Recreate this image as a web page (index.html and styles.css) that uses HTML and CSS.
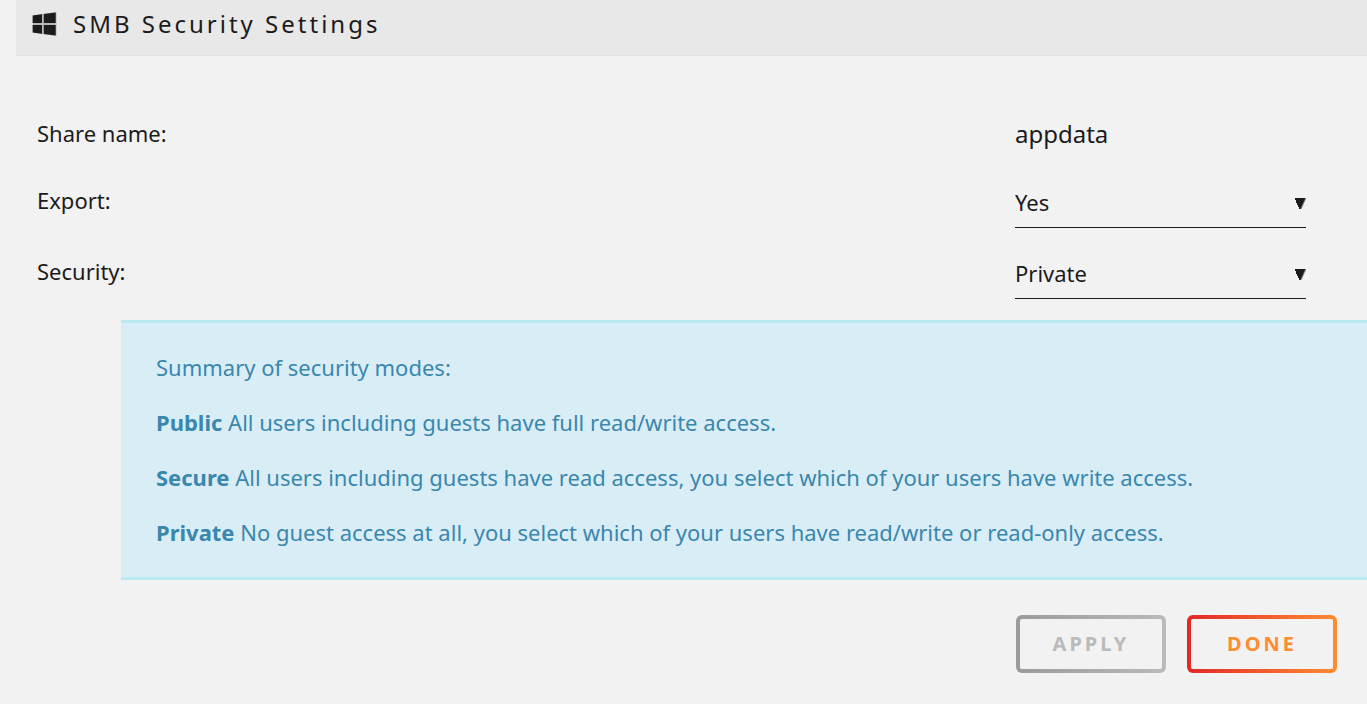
FILE: index.html
```html
<!DOCTYPE html>
<html lang="en">
<head>
<meta charset="utf-8">
<meta name="viewport" content="width=device-width, initial-scale=1">
<title>SMB Security Settings</title>
<link rel="stylesheet" href="styles.css">
</head>
<body>
<header class="title">
  <svg class="title-icon" viewBox="0 0 24 24" aria-hidden="true">
    <path class="icon-back" d="M0 3.2 24 0v24L0 20.8z"/>
    <path class="icon-pane" d="M.2 3.500 9.500 2.300V11H.2zM11.300 2 23.200.5V11H11.300zM.2 13H9.500v8.700L.2 20.500zM11.300 13H23.200v10.500L11.300 22z"/>
  </svg>
  <h1 class="title-text">SMB Security Settings</h1>
</header>
<main>
  <form class="form">
    <div class="row row-static">
      <span class="label">Share name:</span>
      <span class="share-name">appdata</span>
    </div>
    <div class="row">
      <label class="label" for="export">Export:</label>
      <select class="select" id="export"><option>Yes</option><option>No</option></select>
    </div>
    <div class="row row-last">
      <label class="label" for="security">Security:</label>
      <select class="select" id="security"><option>Private</option><option>Secure</option><option>Public</option></select>
    </div>
    <section class="help">
      <p class="help-line">Summary of security modes:</p>
      <p class="help-line"><b>Public</b> All users including guests have full read/write access.</p>
      <p class="help-line"><b>Secure</b> All users including guests have read access, you select which of your users have write access.</p>
      <p class="help-line"><b>Private</b> No guest access at all, you select which of your users have read/write or read-only access.</p>
    </section>
    <div class="actions">
      <button class="button button-apply" type="submit" disabled>APPLY</button>
      <button class="button button-done" type="button">DONE</button>
    </div>
  </form>
</main>
</body>
</html>
```
FILE: styles.css
```css
* {
  box-sizing: border-box;
}

body {
  margin: 0;
  background: #f2f2f2;
  color: #1c1b1b;
  font-family: "Noto Sans", "Open Sans", sans-serif;
  font-size: 22px;
  line-height: 26px;
}

.title {
  display: flex;
  align-items: center;
  gap: 16px;
  height: 56px;
  margin-left: 16px;
  padding: 0 16px 8px;
  background: #e8e8e8;
  border-bottom: 1px solid #e0e0e0;
}

.title-icon {
  width: 25px;
  height: 24px;
}

.icon-back {
  fill: #b8bab8;
}

.icon-pane {
  fill: #1c1b1b;
}

.title-text {
  margin: 0;
  font-size: 24px;
  font-weight: 400;
  letter-spacing: 3px;
}

.form {
  padding-top: 64px;
}

.row {
  display: grid;
  grid-template-columns: minmax(0, 1fr) 291px;
  align-items: start;
  height: 71px;
  padding: 0 61px 0 37px;
}

.row-static {
  height: 67px;
}

.row-last {
  height: 62px;
}

.share-name {
  font-size: 24px;
  line-height: 28px;
}

.select {
  appearance: none;
  height: 41px;
  padding: 0 24px 10px 0;
  border: 0;
  border-bottom: 1px solid #1c1b1b;
  border-radius: 0;
  background-color: transparent;
  background-image:
    linear-gradient(66deg, transparent 44%, #1c1b1b 44%),
    linear-gradient(114deg, #1c1b1b 44%, transparent 64%);
  background-position: right 6px top 11px, right 0 top 11px;
  background-size: 5px 11px, 6px 11px;
  background-repeat: no-repeat;
  color: inherit;
  font: inherit;
}

.help {
  margin-left: 121px;
  padding: 31px 35px 32px;
  border-top: 3px solid #b9e9f1;
  border-bottom: 3px solid #b9e9f1;
  background: #d9edf7;
  color: #3a87ad;
}

.help-line {
  margin: 0;
}

.help-line + .help-line {
  margin-top: 29px;
}

.actions {
  display: flex;
  justify-content: flex-end;
  gap: 21px;
  padding: 35px 30px 31px;
}

.button {
  width: 150px;
  height: 58px;
  padding: 0;
  border: 4px solid transparent;
  border-radius: 6px;
  font: 700 20px/28px "Noto Sans", "Open Sans", sans-serif;
  letter-spacing: 3px;
}

.button-apply {
  background: linear-gradient(#f2f2f2, #f2f2f2) padding-box, linear-gradient(90deg, #999b9a, #bababa) border-box;
  color: #bababa;
}

.button-done {
  background: linear-gradient(#f2f2f2, #f2f2f2) padding-box, linear-gradient(90deg, #e22828, #ff8c2f) border-box;
  color: #ff8c2f;
}
```
